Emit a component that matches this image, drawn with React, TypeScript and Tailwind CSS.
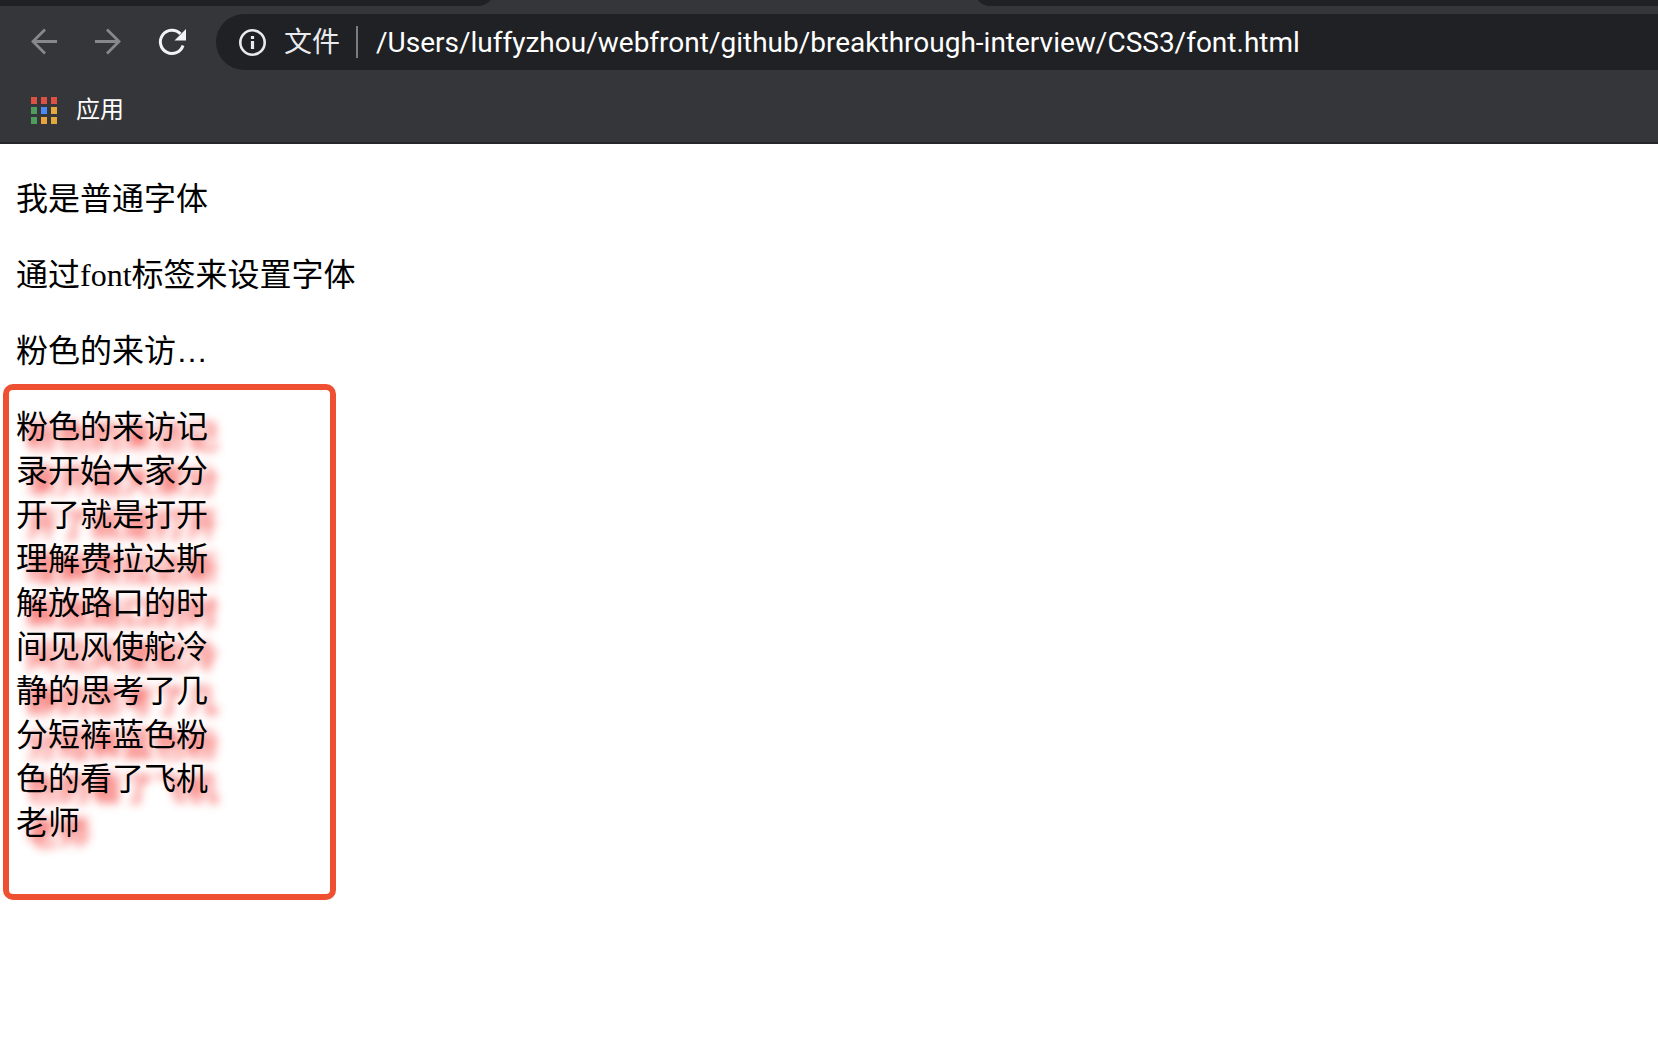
const appColors = [
  'bg-[#dd5144]',
  'bg-[#dd5144]',
  'bg-[#dd5144]',
  'bg-[#4f9d5d]',
  'bg-[#4a8af4]',
  'bg-[#e2a93b]',
  'bg-[#4f9d5d]',
  'bg-[#e8a33d]',
  'bg-[#e2a93b]'
]

function TabStrip() {
  return (
    <div className="flex h-[6px] bg-[#202124]">
      <svg className="ml-[480px] h-[6px] w-[508px]" viewBox="0 0 508 6" fill="#35363a">
        <path d="M0 6C5 5 8 3 11 0H498C500 3 503 5 508 6Z" />
      </svg>
    </div>
  )
}

function Toolbar() {
  return (
    <div className="flex items-center pt-2 pl-7">
      <button aria-label="后退" className="text-[#87888b]">
        <svg className="h-8 w-8" viewBox="0 0 32 32" fill="none" stroke="currentColor" strokeWidth="2.8">
          <path d="M29 15.5H5M17 3.5L5 15.5L17 27.5" />
        </svg>
      </button>
      <button aria-label="前进" className="ml-8 text-[#87888b]">
        <svg className="h-8 w-8" viewBox="0 0 32 32" fill="none" stroke="currentColor" strokeWidth="2.8">
          <path d="M3 15.5H27M15 3.5L27 15.5L15 27.5" />
        </svg>
      </button>
      <button aria-label="重新加载" className="ml-8 text-[#f1f3f4]">
        <svg className="h-8 w-8" viewBox="0 0 32 32">
          <path
            d="M27 19.5A11.6 11.6 0 1 1 24.4 7.9"
            fill="none"
            stroke="currentColor"
            strokeWidth="3"
          />
          <path d="M30 3V14.5H18.5Z" fill="currentColor" />
        </svg>
      </button>
      <div className="ml-7 flex h-14 flex-1 items-center rounded-l-full bg-[#202124] pl-[22px]">
        <svg className="h-7 w-7" viewBox="0 0 28 28" fill="none" stroke="#e8eaed">
          <circle cx="14.5" cy="14.5" r="12.2" strokeWidth="2.6" />
          <path d="M14.5 13V21M14.5 8V11" strokeWidth="3.2" />
        </svg>
        <label htmlFor="url" className="ml-[18px] pt-[2px] text-[28px] leading-10 text-[#e8eaed]">
          文件
        </label>
        <span className="ml-4 h-8 w-[2px] bg-[#7b7c7f]" />
        <input
          id="url"
          type="text"
          spellCheck={false}
          defaultValue="/Users/luffyzhou/webfront/github/breakthrough-interview/CSS3/font.html"
          className="ml-[18px] h-10 min-w-0 flex-1 bg-transparent pt-[2px] font-['Roboto','Liberation_Sans',sans-serif] text-[28px] text-white outline-none"
        />
      </div>
    </div>
  )
}

function BookmarksBar() {
  return (
    <div className="flex h-[74px] items-center border-b-2 border-[#25262a] pt-2 pl-[31px]">
      <a href="#apps" className="flex items-center gap-[19px] text-2xl leading-8 text-white">
        <span className="grid grid-cols-3 gap-x-1 gap-y-[3px]">
          {appColors.map((color, i) => (
            <span key={i} className={`h-[7px] w-[6px] ${color}`} />
          ))}
        </span>
        应用
      </a>
    </div>
  )
}

export default function App() {
  return (
    <div className="min-h-screen bg-white font-['Liberation_Sans','Noto_Sans_CJK_SC',sans-serif]">
      <header className="bg-[#35363a]">
        <TabStrip />
        <Toolbar />
        <BookmarksBar />
      </header>

      <main className="pt-[33px] text-[32px] leading-[44px] text-black">
        <p className="px-4">我是普通字体</p>
        <p className="mt-8 px-4 font-['Liberation_Serif','Noto_Sans_CJK_SC',serif]">
          通过font标签来设置字体
        </p>
        <p className="mt-8 px-4">粉色的来访…</p>

        {/* Bloque resaltado: texto con sombra */}
        <div className="mt-[11px] ml-[3px] w-[333px] rounded-[10px] border-[6px] border-[#ef5032] pt-[15px] pb-[49px] pl-[7px]">
          <p className="w-[192px] [text-shadow:10px_10px_10px_#f3302a]">
            粉色的来访记录开始大家分开了就是打开理解费拉达斯解放路口的时间见风使舵冷静的思考了几分短裤蓝色粉色的看了飞机老师
          </p>
        </div>
      </main>
    </div>
  )
}
